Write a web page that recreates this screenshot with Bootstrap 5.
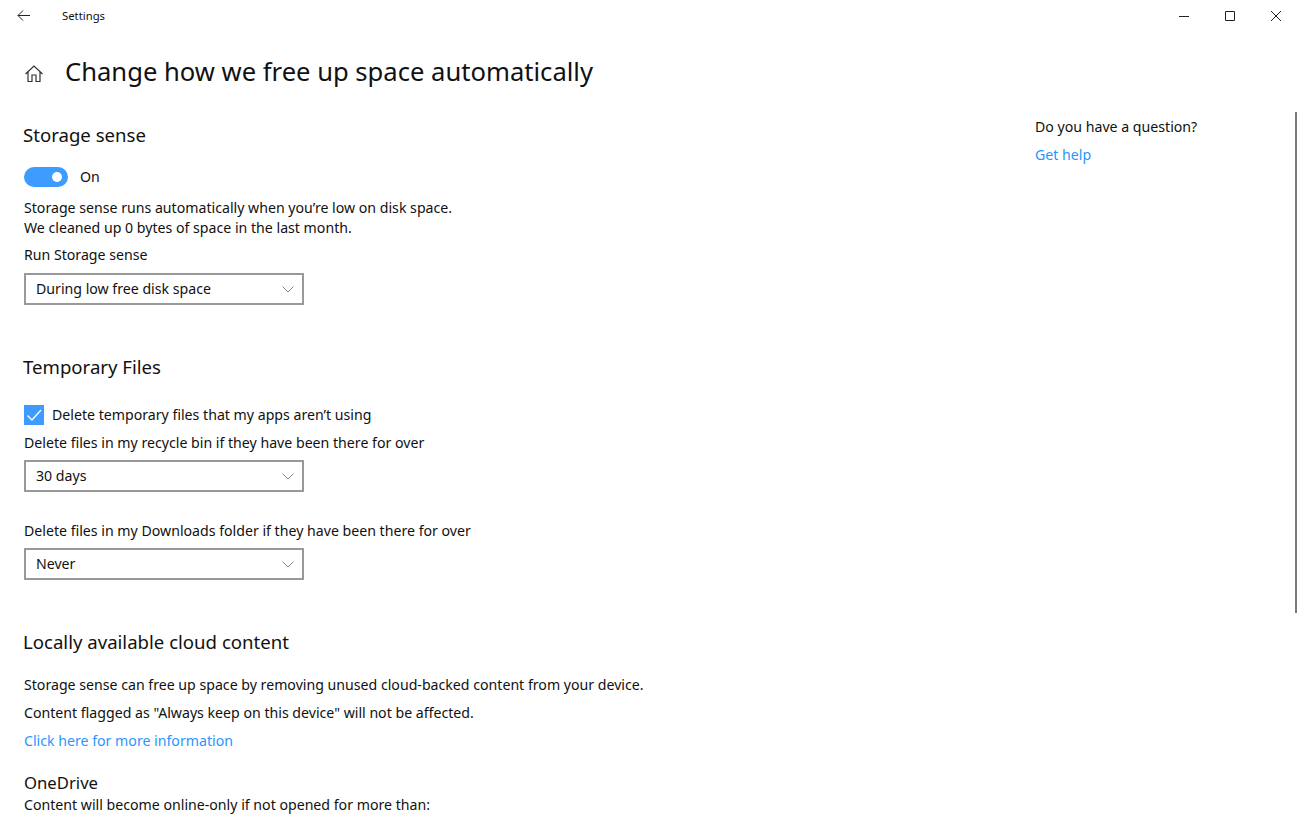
<!DOCTYPE html>
<html lang="en">
  <head>
    <meta charset="UTF-8" />
    <title>Settings</title>
    <link href="https://cdn.jsdelivr.net/npm/bootstrap@5.3.0/dist/css/bootstrap.min.css" rel="stylesheet" />
    <style>
      html, body {
        height: 815px;
        overflow: hidden;
      }
      body {
        background: #fff;
        color: #111;
        font-family: "Noto Sans", "Open Sans", sans-serif;
        font-size: 14.15px;
        line-height: 20px;
      }
      a {
        color: #2a95ff;
        text-decoration: none;
      }
      .title-bar {
        height: 32px;
        font-size: 11.3px;
      }
      .back-btn {
        width: 48px;
        padding-left: 17px;
      }
      .back-btn svg {
        margin-bottom: 2px;
      }
      .app-name {
        margin-left: 14px;
      }
      .win-btn {
        width: 46px;
      }
      .page-head {
        height: 48px;
        margin-top: 16px;
        padding-left: 25px;
      }
      .home-icon {
        margin-top: 2px;
      }
      .page-title {
        font-size: 25.6px;
        line-height: 48px;
        font-weight: 400;
        margin: 0 0 0 22px;
      }
      .sec-title {
        font-size: 18.6px;
        line-height: 26px;
        font-weight: 400;
        margin: 49px 0 0 -1px;
      }
      .sec-title.first {
        margin-top: 26px;
      }
      .main-col {
        padding-left: 24px;
        width: 1035px;
      }
      .side-col {
        padding-top: 21px;
      }
      .help-link {
        margin-top: 8px;
      }
      .form-check.win-row {
        min-height: 0;
      }
      .sw-row {
        margin-top: 19px;
      }
      .chk-row {
        margin-top: 25px;
      }
      .form-switch .form-check-input.win-switch {
        width: 44px;
        height: 20px;
        margin: 0;
        float: none;
        border: 0;
        border-radius: 10px;
        background-color: #3e9bff;
        background-image: url("data:image/svg+xml,%3csvg xmlns='http://www.w3.org/2000/svg' viewBox='0 0 20 20'%3e%3ccircle cx='10' cy='10' r='5' fill='%23fff'/%3e%3c/svg%3e");
        background-position: right 1px center;
      }
      .form-check-input.win-check {
        width: 20px;
        height: 20px;
        margin: 0;
        float: none;
        border: 0;
        border-radius: 0;
        background-color: #3e9bff;
        background-size: 20px 20px;
        background-image: url("data:image/svg+xml,%3csvg xmlns='http://www.w3.org/2000/svg' viewBox='0 0 20 20'%3e%3cpath d='M3.500 10.500l4.500 4.500 9-10' fill='none' stroke='%23fff' stroke-width='1.300'/%3e%3c/svg%3e");
      }
      .form-select.win-select {
        width: 280px;
        height: 32px;
        margin-top: 7px;
        padding: 0 30px 0 10px;
        border: 2px solid #999;
        border-radius: 0;
        color: #111;
        font-size: 14.15px;
        line-height: 28px;
        background-position: right 8px center;
        background-size: 12px 7px;
        background-image: url("data:image/svg+xml,%3csvg xmlns='http://www.w3.org/2000/svg' viewBox='0 0 12 7'%3e%3cpath d='M.5 .5l5.500 5.500 5.500-5.500' fill='none' stroke='%23888' stroke-width='1'/%3e%3c/svg%3e");
      }
      .form-select.win-select.first {
        margin-top: 8px;
      }
      .row-label {
        display: block;
        margin-top: 8px;
      }
      .row-label.tight {
        margin-top: 7px;
      }
      .row-label.far {
        margin-top: 29px;
      }
      .body-line {
        margin: 8px 0 0;
      }
      .body-line.lead-in {
        margin-top: 20px;
      }
      .body-line.after-switch {
        margin-top: 11px;
      }
      .one-title {
        font-size: 16.7px;
        line-height: 22px;
        margin-top: 21px;
      }
      .one-text {
        margin-top: 1px;
      }
      .scroll-thumb {
        position: absolute;
        left: 1295px;
        top: 112px;
        width: 2px;
        height: 501px;
        background: #7a7a7a;
      }
    </style>
  </head>
  <body class="position-relative">
    <div class="title-bar d-flex align-items-center">
      <div class="back-btn d-flex align-items-center">
        <svg width="13" height="11" viewBox="0 0 13 11" fill="none" stroke="#222" stroke-width="1"><path d="M13 5.500H1M6 .5L1 5.500l5 5"/></svg>
      </div>
      <span class="app-name">Settings</span>
      <div class="ms-auto d-flex">
        <div class="win-btn d-flex justify-content-center"><svg width="10" height="10" viewBox="0 0 10 10" stroke="#222" fill="none"><path d="M0 5.500h10"/></svg></div>
        <div class="win-btn d-flex justify-content-center"><svg width="10" height="10" viewBox="0 0 10 10" stroke="#222" fill="none"><path d="M.5 .5h9v9h-9z"/></svg></div>
        <div class="win-btn d-flex justify-content-center"><svg width="10" height="10" viewBox="0 0 10 10" stroke="#222" fill="none"><path d="M0 0l10 10M10 0L0 10"/></svg></div>
      </div>
    </div>

    <div class="page-head d-flex align-items-center">
      <svg class="home-icon" width="18" height="17" viewBox="0 0 18 17" fill="none" stroke="#333" stroke-width="1.200"><path d="M.5 9L9 1l8.500 8M3 7v9.500h4V10h4v6.500h4V7"/></svg>
      <h1 class="page-title">Change how we free up space automatically</h1>
    </div>

    <div class="d-flex">
      <div class="main-col">
        <h2 class="sec-title first">Storage sense</h2>
        <div class="form-check form-switch win-row sw-row d-flex align-items-center gap-2 p-0">
          <input class="form-check-input win-switch" type="checkbox" id="sense" checked />
          <label class="form-check-label ms-1" for="sense">On</label>
        </div>
        <p class="body-line after-switch">Storage sense runs automatically when you’re low on disk space.<br />We cleaned up 0 bytes of space in the last month.</p>
        <label class="row-label tight" for="run">Run Storage sense</label>
        <select class="form-select win-select first" id="run"><option>During low free disk space</option></select>

        <h2 class="sec-title">Temporary Files</h2>
        <div class="form-check win-row chk-row d-flex align-items-center gap-2 p-0">
          <input class="form-check-input win-check" type="checkbox" id="temp" checked />
          <label class="form-check-label" for="temp">Delete temporary files that my apps aren’t using</label>
        </div>
        <label class="row-label" for="bin">Delete files in my recycle bin if they have been there for over</label>
        <select class="form-select win-select" id="bin"><option>30 days</option></select>
        <label class="row-label far" for="dl">Delete files in my Downloads folder if they have been there for over</label>
        <select class="form-select win-select" id="dl"><option>Never</option></select>

        <h2 class="sec-title">Locally available cloud content</h2>
        <p class="body-line lead-in">Storage sense can free up space by removing unused cloud-backed content from your device.</p>
        <p class="body-line">Content flagged as "Always keep on this device" will not be affected.</p>
        <p class="body-line"><a href="#">Click here for more information</a></p>
        <div class="one-title">OneDrive</div>
        <div class="one-text">Content will become online-only if not opened for more than:</div>
      </div>
      <div class="side-col">
        <div>Do you have a question?</div>
        <div class="help-link"><a href="#">Get help</a></div>
      </div>
    </div>
    <div class="scroll-thumb"></div>
  </body>
</html>
